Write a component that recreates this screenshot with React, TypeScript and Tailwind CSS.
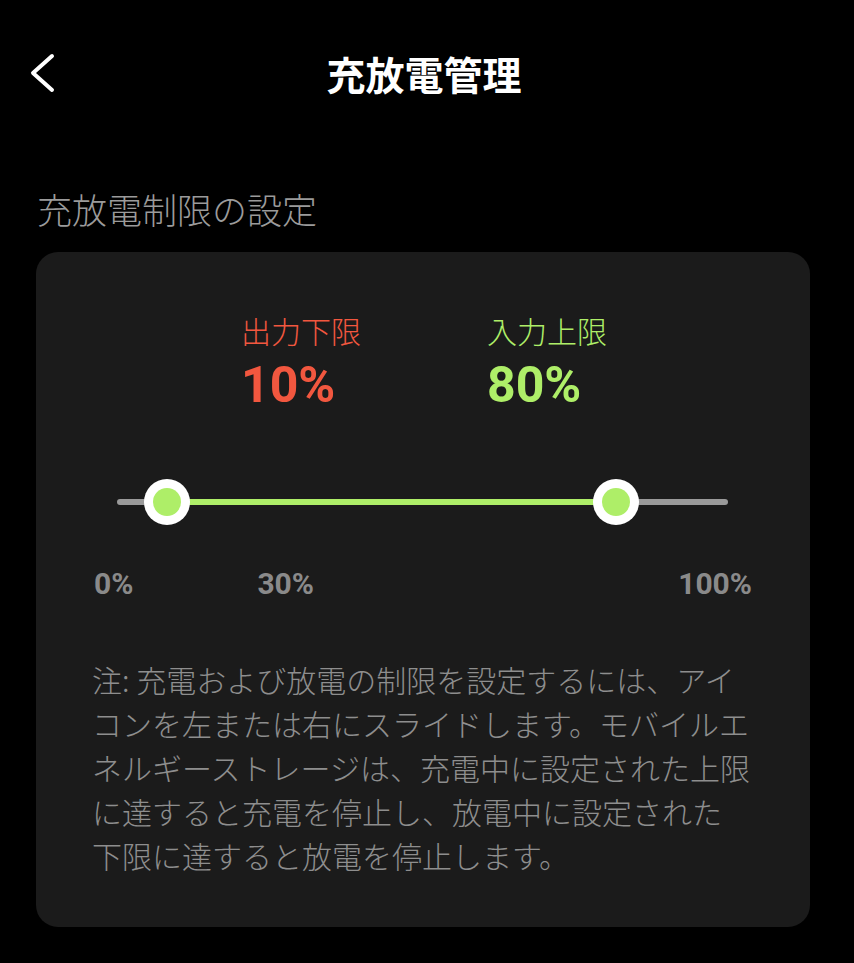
import React from "react";

const cjk = { fontFamily: '"Noto Sans CJK JP", "Noto Sans", sans-serif' };
const num = { fontFamily: 'Roboto, "Noto Sans CJK JP", sans-serif' };

const noteLines = [
  "注: 充電および放電の制限を設定するには、アイ",
  "コンを左または右にスライドします。モバイルエ",
  "ネルギーストレージは、充電中に設定された上限",
  "に達すると充電を停止し、放電中に設定された",
  "下限に達すると放電を停止します。",
];

const Thumb = ({ left }: { left: number }) => (
  <div
    className="absolute top-1/2 flex h-[46px] w-[46px] -translate-x-1/2 -translate-y-1/2 items-center justify-center rounded-full bg-white"
    style={{ left }}
  >
    <div className="h-[28px] w-[28px] rounded-full bg-[#aeee68]" />
  </div>
);

const App: React.FC = () => {
  // track spans 611px; thumbs sit at 10% / 80%
  const low = 50;
  const high = 499;

  return (
    <div className="min-h-[963px] w-[854px] bg-black text-white" style={cjk}>
      <header className="relative flex h-[146px] items-center justify-center">
        <button type="button" className="absolute left-[28px] top-[53px]">
          <svg width="30" height="40" viewBox="0 0 30 40" fill="none">
            <polyline
              points="24,3 5,20 24,37"
              stroke="white"
              strokeWidth="4"
              strokeLinecap="round"
              strokeLinejoin="round"
            />
          </svg>
        </button>
        <h1 className="pr-[6px] text-[39px] font-bold leading-[46px]">充放電管理</h1>
      </header>

      <h2 className="mt-[42px] px-[37px] text-[35px] font-light leading-[42px] text-[#9b9b9b]">充放電制限の設定</h2>

      <section className="ml-[36px] mr-[44px] mt-[22px] rounded-[22px] bg-[#1b1b1b] pb-[50px] pt-[60px]">
        <div className="flex pl-[205px]">
          <div className="w-[246px]">
            <div className="text-[30px] font-light leading-[36px] text-[#f2573f]">出力下限</div>
            <div className="mt-[9px] text-[50px] font-bold leading-[56px] text-[#f2573f]" style={num}>
              10%
            </div>
          </div>
          <div>
            <div className="text-[30px] font-light leading-[36px] text-[#aeee68]">入力上限</div>
            <div className="mt-[9px] text-[50px] font-bold leading-[56px] text-[#aeee68]" style={num}>
              80%
            </div>
          </div>
        </div>

        <div className="relative ml-[81px] mr-[82px] mt-[64px] h-[50px]">
          <div className="absolute left-0 right-0 top-1/2 h-[6px] -translate-y-1/2 rounded-full bg-[#9a9a9a]" />
          <div
            className="absolute top-1/2 h-[6px] -translate-y-1/2 bg-[#aeee68]"
            style={{ left: low, width: high - low }}
          />
          <Thumb left={low} />
          <Thumb left={high} />
        </div>

        <div className="mt-[40px] flex px-[58px] text-[30px] font-bold leading-[34px] text-[#8a8a8a]" style={num}>
          <span>0%</span>
          <span className="ml-[124px]">30%</span>
          <span className="ml-auto">100%</span>
        </div>

        <p className="mt-[56px] px-[56px] text-[30px] font-light leading-[44px] text-[#8e8e8e]">
          {noteLines.map((line, i) => (
            <span key={i} className="block whitespace-nowrap">
              {line}
            </span>
          ))}
        </p>
      </section>
    </div>
  );
};

export default App;
